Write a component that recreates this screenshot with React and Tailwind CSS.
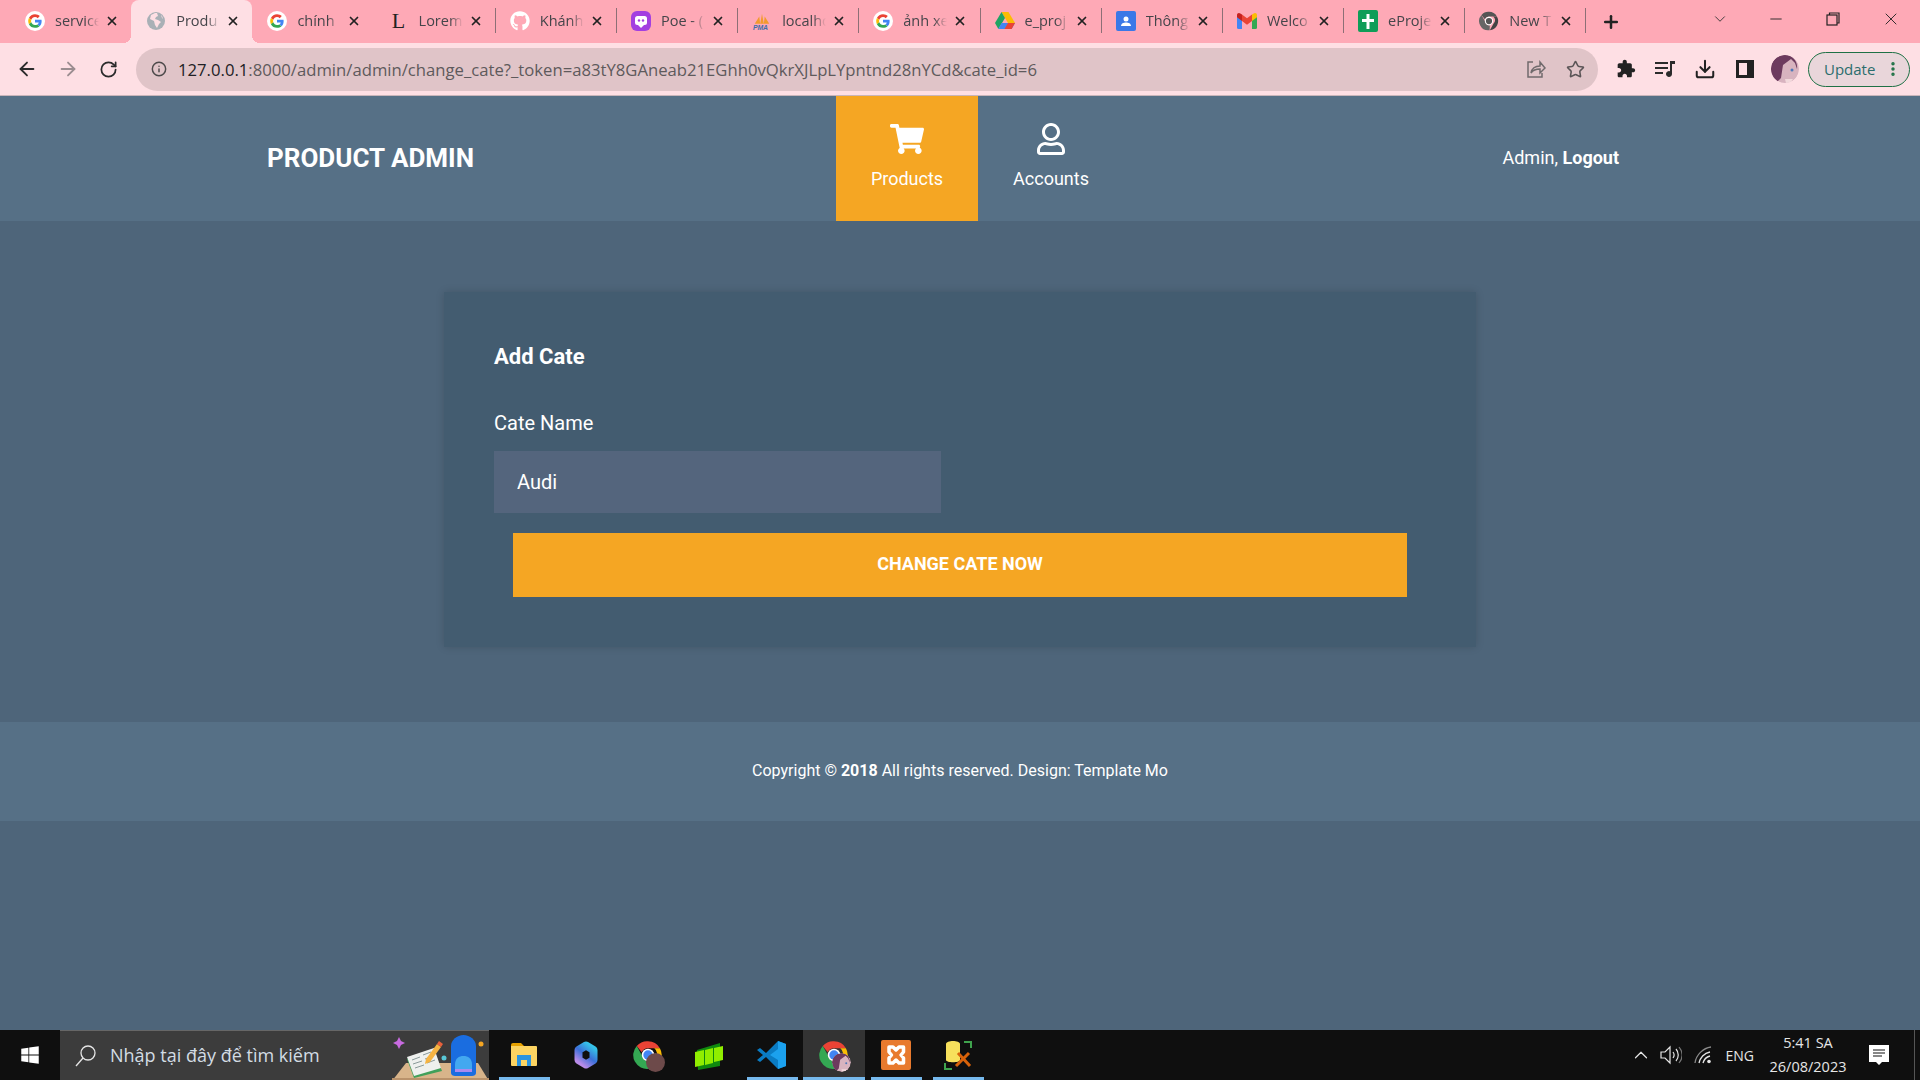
import React from "react";
import { FaShoppingCart, FaRegUser, FaWindows, FaGithub } from "react-icons/fa";
import { ArrowLeft, ArrowRight, RotateCw, Info, Star, Download, Plus, X, Minus, ChevronDown, ChevronUp, EllipsisVertical } from "lucide-react";

const GoogleIcon = () => (
  <svg width="20" height="20" viewBox="0 0 48 48">
    <circle cx="24" cy="24" r="24" fill="#fff" />
    <path fill="#EA4335" d="M24 14.5c2.6 0 4.8.9 6.6 2.6l4.9-4.9C32.500 9.400 28.600 7.700 24 7.700c-6.400 0-11.900 3.700-14.600 9l5.700 4.400c1.300-3.900 4.900-6.600 8.900-6.600z" />
    <path fill="#4285F4" d="M39.900 24.400c0-1.200-.1-2.300-.3-3.400H24v6.400h9c-.4 2.100-1.600 3.900-3.300 5.100l5.400 4.200c3-2.900 4.800-7.100 4.800-12.300z" />
    <path fill="#FBBC05" d="M15.100 27.100c-.3-1-.5-2-.5-3.100s.2-2.100.5-3.100l-5.700-4.400C8.300 18.800 7.700 21.300 7.700 24s.6 5.200 1.700 7.500l5.700-4.400z" />
    <path fill="#34A853" d="M24 40.300c4.400 0 8.100-1.500 10.800-3.900l-5.400-4.200c-1.500 1-3.300 1.600-5.400 1.600-4 0-7.600-2.700-8.900-6.600l-5.700 4.400c2.700 5.300 8.200 8.700 14.600 8.700z" />
  </svg>
);

const GlobeIcon = () => (
  <svg width="20" height="20" viewBox="0 0 20 20">
    <circle cx="10" cy="10" r="9" fill="#a9b0b6" />
    <path fill="#fedfe4" d="M9 2 5 4 4 8l4 2 1 4 2 3 2-4 2-2-3-2-3-1 1-2 2-1-1-3zM15 4l1 3 1 1-1-3z" />
  </svg>
);

const LoremIcon = () => (
  <span className="w-5 text-center text-[22px] leading-none text-[#222] [font-family:'Liberation_Serif',serif]">L</span>
);

const PoeIcon = () => (
  <svg width="20" height="20" viewBox="0 0 20 20">
    <rect x="0" y="0" width="20" height="20" rx="6" fill="#a33fe0" />
    <rect x="4" y="5" width="12" height="9" rx="2.500" fill="#fff" />
    <circle cx="8" cy="9.500" r="1.200" fill="#a33fe0" />
    <circle cx="12" cy="9.500" r="1.200" fill="#a33fe0" />
    <path d="M7 14h6l-3 3z" fill="#fff" />
  </svg>
);

const PmaIcon = () => (
  <svg width="22" height="20" viewBox="0 0 22 20">
    <path d="M3 13 8 5l1 8zM9 13l2-11 2 11zM13 13l1-8 5 8z" fill="#f39a2d" />
    <text x="1" y="19.500" fontSize="7.500" fontWeight="700" fontStyle="italic" fill="#3f6ea8" fontFamily="Liberation Sans, sans-serif">PMA</text>
  </svg>
);

const DriveIcon = () => (
  <svg width="20" height="18" viewBox="0 0 20 18">
    <path d="M6.500 0h7l6.500 11h-7z" fill="#fbbc04" />
    <path d="M6.500 0 0 11l3.400 6 6.600-11z" fill="#1fa463" />
    <path d="M6.500 11H20l-3.400 6H3.400z" fill="#4285f4" />
    <path d="M13 11h7l-3.400 6H9.500z" fill="#ea4335" />
  </svg>
);

const ContactsIcon = () => (
  <svg width="20" height="20" viewBox="0 0 20 20">
    <rect width="20" height="20" rx="2" fill="#3b78e7" />
    <circle cx="10" cy="8" r="2.500" fill="#fff" />
    <path d="M5 15c0-2.500 2.500-3.500 5-3.500s5 1 5 3.500z" fill="#fff" />
  </svg>
);

const GmailIcon = () => (
  <svg width="20" height="16" viewBox="0 0 20 16">
    <path d="M0 2v12.500A1.500 1.500 0 0 0 1.500 16H5V7z" fill="#4285f4" />
    <path d="M20 2v12.500a1.500 1.500 0 0 1-1.500 1.500H15V7z" fill="#34a853" />
    <path d="M15 1.500V8l5-3.700V2c0-1.800-2-2.600-3.300-1.500z" fill="#fbbc04" />
    <path d="M5 8V1.500l5 3.800 5-3.800V8l-5 3.700z" fill="#ea4335" />
    <path d="M0 2v2.300L5 8V1.500L3.300.5C2 -.6 0 .2 0 2z" fill="#c5221f" />
  </svg>
);

const SheetIcon = () => (
  <svg width="20" height="22" viewBox="0 0 20 22">
    <rect width="20" height="22" rx="2" fill="#0f9d58" />
    <path d="M8.500 4h3v5H16v3h-4.500v7h-3v-7H4V9h4.500z" fill="#fff" />
  </svg>
);

const ChromeIcon = ({ size = 20, gray = false }) => (
  <svg width={size} height={size} viewBox="0 0 48 48">
    <path d="M24 2a22 22 0 0 1 19 11H24a11 11 0 0 0-10 6.500L6 9.500A22 22 0 0 1 24 2z" fill={gray ? "#555" : "#ea4335"} />
    <path d="M43 13a22 22 0 0 1-17 33l9-16a11 11 0 0 0-1-17z" fill={gray ? "#444" : "#fbbc04"} />
    <path d="M6 9.500 15 26a11 11 0 0 0 11 9l-.5 11A22 22 0 0 1 6 9.500z" fill={gray ? "#666" : "#34a853"} />
    <circle cx="24" cy="24" r="10" fill="#fff" />
    <circle cx="24" cy="24" r="7.500" fill={gray ? "#555" : "#4285f4"} />
  </svg>
);

const Avatar = ({ size = 28 }) => (
  <svg width={size} height={size} viewBox="0 0 28 28" className="rounded-full">
    <circle cx="14" cy="14" r="14" fill="#d8b3bf" />
    <path d="M14 0C6 0 0 6 0 14c0 6 2 10 6 13l4-4 2-13 8-6 4 4 2 6c1-7-4-14-12-14z" fill="#6d3a5e" />
    <circle cx="21" cy="15" r="1.500" fill="#4f78b8" />
    <path d="M14 24h8l-3 4h-4z" fill="#f2d9dc" />
  </svg>
);

const tabs = [
  { title: "service", icon: <GoogleIcon /> },
  { title: "Produ", icon: <GlobeIcon />, active: true },
  { title: "chính", icon: <GoogleIcon /> },
  { title: "Lorem", icon: <LoremIcon />, sep: true },
  { title: "Khánh", icon: <FaGithub size={20} color="#fff" />, sep: true },
  { title: "Poe - (", icon: <PoeIcon />, sep: true },
  { title: "localho", icon: <PmaIcon />, sep: true },
  { title: "ảnh xe", icon: <GoogleIcon />, sep: true },
  { title: "e_proj", icon: <DriveIcon />, sep: true },
  { title: "Thông", icon: <ContactsIcon />, sep: true },
  { title: "Welco", icon: <GmailIcon />, sep: true },
  { title: "eProje", icon: <SheetIcon />, sep: true },
  { title: "New T", icon: <ChromeIcon gray />, sep: true },
];

function Tab({ tab, showSep }) {
  return (
    <div className={`relative flex h-[43px] w-[121.2px] shrink-0 items-center pb-[2px] pl-[15px] ${tab.active ? "rounded-t-lg bg-[#fedfe4]" : ""}`}>
      {tab.active && (
        <>
          <span className="absolute -left-2 bottom-0 size-2 bg-[radial-gradient(circle_at_0_0,transparent_8px,#fedfe4_8px)]" />
          <span className="absolute -right-2 bottom-0 size-2 bg-[radial-gradient(circle_at_100%_0,transparent_8px,#fedfe4_8px)]" />
        </>
      )}
      <span className="flex w-5 shrink-0 items-center justify-center">{tab.icon}</span>
      <span className="ml-[10px] w-[44px] overflow-hidden whitespace-nowrap text-[14.500px] text-[#45454a] [mask-image:linear-gradient(90deg,#000_70%,transparent)]">
        {tab.title}
      </span>
      <X size={14} strokeWidth={3} className="ml-[6px] shrink-0 text-[#222]" />
      {showSep && <span className="ml-auto mr-[-1px] h-[25px] w-px bg-[#8d6f76]" />}
    </div>
  );
}

function BrowserChrome() {
  return (
    <div className="shrink-0 [font-family:'Open_Sans',sans-serif]">
      <div className="flex h-[43px] items-center bg-[#fea9b6] pl-[10px]">
        {tabs.map((tab) => (
          <Tab key={tab.title} tab={tab} showSep={tab.sep} />
        ))}
        <Plus size={20} strokeWidth={3} className="ml-[16px] text-[#222]" />
        <ChevronDown size={18} strokeWidth={1.2} className="ml-[90px] -mt-[5px] text-[#333]" />
        <Minus size={18} strokeWidth={1.2} className="ml-[38px] -mt-[5px] text-[#222]" />
        <svg width="14" height="14" viewBox="0 0 14 14" className="ml-[41px] -mt-[5px]" fill="none" stroke="#222" strokeWidth="1.200">
          <rect x="1" y="3" width="10" height="10" />
          <path d="M3.500 3V1H13v10h-2" />
        </svg>
        <X size={20} strokeWidth={1.100} className="ml-[41px] -mt-[5px] text-[#222]" />
      </div>
      <div className="flex h-[52px] items-center bg-[#fedfe4] pl-[16px]">
        <ArrowLeft size={22} strokeWidth={2} className="text-[#2b2b2b]" />
        <ArrowRight size={22} strokeWidth={2} className="ml-[19px] text-[#9b8d90]" />
        <RotateCw size={19} strokeWidth={2.200} className="ml-[20px] text-[#2b2b2b]" />
        <div className="ml-[18px] flex h-[43px] w-[1462px] items-center rounded-full bg-[#e0c4c8] pl-[15px]">
          <Info size={16} strokeWidth={2.200} className="text-[#4d4a4b]" />
          <span className="ml-[11px] whitespace-nowrap pt-[1px] text-[16.680px] text-[#5e5a5c]">
            <span className="text-[#202124]">127.0.0.1</span>:8000/admin/admin/change_cate?_token=a83tY8GAneab21EGhh0vQkrXJLpLYpntnd28nYCd&amp;cate_id=6
          </span>
          <svg width="20" height="20" viewBox="0 0 20 20" fill="none" stroke="#706a6c" strokeWidth="1.500" className="ml-auto">
            <path d="M7 3H2v15h14v-4" />
            <path d="M5 14c1-5 5-7 9-7V3l5 6-5 5v-4c-4 0-7 1-9 4z" />
          </svg>
          <Star size={19} strokeWidth={2} className="ml-[20px] mr-[13px] text-[#5b5557]" />
        </div>
        <svg width="20" height="20" viewBox="0 0 24 24" fill="#222" className="ml-[18px]">
          <path d="M20.500 11H19V7c0-1.100-.9-2-2-2h-4V3.500C13 2.120 11.880 1 10.500 1S8 2.120 8 3.500V5H4c-1.100 0-1.990.9-1.990 2v3.800H3.500c1.490 0 2.700 1.210 2.700 2.700s-1.210 2.700-2.700 2.700H2V20c0 1.100.9 2 2 2h3.800v-1.500c0-1.490 1.210-2.700 2.700-2.700 1.490 0 2.700 1.210 2.700 2.700V22H17c1.100 0 2-.9 2-2v-4h1.500c1.380 0 2.500-1.120 2.500-2.500S21.880 11 20.500 11z" />
        </svg>
        <svg width="20" height="18" viewBox="0 0 20 18" className="ml-[19px]" fill="#2b2b2b">
          <path d="M0 2h13v2H0zM0 7h13v2H0zM0 12h8v2H0zM15 1h5v3h-3v10a3 3 0 1 1-2-2.800z" />
        </svg>
        <Download size={22} strokeWidth={2.200} className="ml-[19px] text-[#222]" />
        <svg width="18" height="18" viewBox="0 0 18 18" className="ml-[20px]">
          <path d="M0 0h18v18H0z" fill="#222" />
          <path d="M3 3h8v12H3z" fill="#fedfe4" />
        </svg>
        <span className="ml-[17px]"><Avatar /></span>
        <div className="ml-[9px] flex h-[35px] w-[102px] items-center rounded-full border border-[#1e7145] bg-[#e9d6da] pl-[15px]">
          <span className="text-[15px] text-[#2b6d6d]">Update</span>
          <EllipsisVertical size={18} strokeWidth={2.600} className="ml-[9px] text-[#1e7145]" />
        </div>
      </div>
    </div>
  );
}

function AdminPage() {
  return (
    <div className="min-h-0 flex-1 bg-[#4e657a] text-white [font-family:Roboto,sans-serif]">
      <nav className="flex h-[125px] items-center bg-[#567086]">
        <div className="w-[836px] pl-[267px] text-[26px] font-bold">PRODUCT ADMIN</div>
        <a className="flex h-full w-[142px] flex-col items-center justify-center bg-[#f5a623] pb-[3px]">
          <FaShoppingCart size={34} />
          <span className="mt-[9px] text-[18px]">Products</span>
        </a>
        <a className="flex h-full w-[146px] flex-col items-center justify-center pb-[3px]">
          <FaRegUser size={32} />
          <span className="mt-[10px] text-[18px]">Accounts</span>
        </a>
        <div className="ml-auto pb-[2px] pr-[301px] text-[18px]">
          Admin, <span className="font-bold">Logout</span>
        </div>
      </nav>

      <div className="mx-auto mt-[71px] h-[355px] w-[1032px] bg-[#435c70] px-[50px] pt-[51px] shadow-[0_0_8px_rgba(0,0,0,0.15)]">
        <h2 className="text-[22px] leading-[28px] font-bold">Add Cate</h2>
        <label className="mt-[40px] block text-[20px] leading-[24px]">Cate Name</label>
        <input
          readOnly
          value="Audi"
          className="mt-[16px] block h-[62px] w-[447px] bg-[#54657d] px-[23px] text-[20px] text-white outline-none"
        />
        <button className="mx-[19px] mt-[20px] block h-[64px] w-[894px] bg-[#f5a623] pb-[3px] text-[18px] font-bold uppercase">
          Change Cate Now
        </button>
      </div>

      <footer className="mt-[75px] flex h-[99px] items-center justify-center bg-[#567086] pb-[1px] text-[16px]">
        <p>
          Copyright © <b>2018</b> All rights reserved. Design: Template Mo
        </p>
      </footer>
    </div>
  );
}

const SearchArt = () => (
  <svg width="97" height="50" viewBox="0 0 97 50" className="ml-auto shrink-0">
    <path d="M0 50 14 32h72l11 18z" fill="#d8b48a" />
    <path d="M0 50h97v-3H0z" fill="#b9926b" />
    <path d="m7 6 2 4 4 2-4 2-2 4-2-4-4-2 4-2z" fill="#c86be0" />
    <path d="M15 28 42 20l8 20-28 7z" fill="#41a05a" />
    <path d="M15 26 42 17l7 20-27 8z" fill="#eef0ee" />
    <path d="M20 29 28 26M21 33 30 30M23 37 32 34M31 24 39 21M33 28 41 25M35 32 43 29" stroke="#8a9a9a" strokeWidth="1" />
    <path d="m34 28 11-15 4 3-11 15-5 2z" fill="#f5b342" />
    <path d="m45 13 2-3 4 3-2 3z" fill="#e8603c" />
    <path d="M59 15c0-6 6-11 12.500-11S84 9 84 15v27c0 2-2 3-4 3H63c-2 0-4-1-4-3z" fill="#1a6de0" />
    <path d="M63 34c0-7 4-9 8.500-9s8.500 2 8.500 9v7H63z" fill="#43a8f0" />
    <path d="M63 38h17v3H63z" fill="#a98af0" />
    <circle cx="89" cy="13" r="2.500" fill="#f5a623" />
    <circle cx="52" cy="27" r="2.500" fill="#58c8d8" />
  </svg>
);

const FolderIcon = () => (
  <svg width="28" height="28" viewBox="0 0 28 28">
    <path d="M1 4a2 2 0 0 1 2-2h8l3 3H1z" fill="#e6a100" />
    <path d="M1 5h25a1 1 0 0 1 1 1v18a1 1 0 0 1-1 1H2a1 1 0 0 1-1-1z" fill="#fcd462" />
    <path d="M7 14h14v11h-4v-6h-6v6H7z" fill="#2a94e0" />
  </svg>
);

const CopilotIcon = () => (
  <svg width="28" height="30" viewBox="0 0 28 30">
    <defs>
      <linearGradient id="copilotRing" x1="0.800" y1="0" x2="0.200" y2="1">
        <stop offset="0" stopColor="#35c1e8" />
        <stop offset="0.500" stopColor="#3b6fd8" />
        <stop offset="1" stopColor="#b98be8" />
      </linearGradient>
    </defs>
    <path d="M14 5.500 21.500 10v10L14 24.500 6.500 20V10z" fill="none" stroke="url(#copilotRing)" strokeWidth="8" strokeLinejoin="round" />
  </svg>
);

const BlocksIcon = () => (
  <svg width="30" height="30" viewBox="0 0 30 30">
    <path d="M2 10 25 3v23L3 30z" fill="#0f8a0f" />
    <path d="M0 12 9 10v15l-9 2zM10 10l8-2v15l-8 2zM19 8l9-2v14l-9 2z" fill="#90ee00" />
  </svg>
);

const VsCodeIcon = () => (
  <svg width="30" height="30" viewBox="0 0 30 30">
    <path d="M21 1 9 13 3 8 0 10l6 5-6 5 3 2 6-5 12 12 8-3V4z" fill="#0a7cc4" />
    <path d="M21 1l8 3v22l-8 3V20l-8-5 8-6z" fill="#1ba1ee" />
  </svg>
);

const XamppIcon = () => (
  <svg width="30" height="30" viewBox="0 0 30 30">
    <rect width="30" height="30" rx="2" fill="#e87a2e" />
    <path d="M8 7h4l3 3 3-3h4.500v5L20 15l2.500 3v5H18l-3-3-3 3H8v-5l2.500-3L8 12z" fill="none" stroke="#fff" strokeWidth="3.500" strokeLinejoin="round" />
  </svg>
);

const ToolsIcon = () => (
  <svg width="30" height="32" viewBox="0 0 30 32">
    <path d="M3 5c0-4 14-4 14 0v16c0 3-14 3-14 0z" fill="#f7e05c" />
    <path d="M21 3h7v6M2 24v6h7" fill="none" stroke="#3fa34d" strokeWidth="2" />
    <path d="m13 27 13-13M15 14l12 13" stroke="#d8620a" strokeWidth="3" />
  </svg>
);

const ChromeBadge = ({ badge }) => (
  <span className="relative block size-[30px]">
    <ChromeIcon size={30} />
    <span className="absolute -bottom-[2px] -right-[2px] block size-[19px] overflow-hidden rounded-full">{badge}</span>
  </span>
);

const taskItems = [
  { icon: <FolderIcon />, line: "w-[51px]" },
  { icon: <CopilotIcon /> },
  { icon: <ChromeBadge badge={<span className="block size-full bg-[#6d4a4a]" />} /> },
  { icon: <BlocksIcon /> },
  { icon: <VsCodeIcon />, line: "w-[51px]" },
  { icon: <ChromeBadge badge={<Avatar size={19} />} />, line: "w-full", active: true },
  { icon: <XamppIcon />, line: "w-[51px]" },
  { icon: <ToolsIcon />, line: "w-[51px]" },
];

function Taskbar() {
  return (
    <div className="flex h-[50px] shrink-0 items-center bg-[#0f0f0f] text-[#e6e6e6] [font-family:'Open_Sans',sans-serif]">
      <div className="flex w-[60px] justify-center">
        <FaWindows size={20} color="#fff" />
      </div>
      <div className="flex h-full w-[429px] items-center overflow-hidden border-t border-[#666] bg-[#3c3c3c] pl-[15px]">
        <svg width="22" height="24" viewBox="0 0 22 24" fill="none" stroke="#e6e6e6" strokeWidth="1.300">
          <circle cx="13" cy="9" r="7" />
          <path d="M8 14 1 22" />
        </svg>
        <span className="ml-[13px] whitespace-nowrap text-[18px] text-[#d3dce4]">Nhập tại đây để tìm kiếm</span>
        <SearchArt />
      </div>
      <div className="ml-[4px] flex h-full">
        {taskItems.map((item, i) => (
          <div key={i} className={`relative flex h-full w-[62px] items-center justify-center ${item.active ? "bg-[#333]" : ""}`}>
            {item.icon}
            {item.line && <span className={`absolute bottom-0 h-[3px] bg-[#76b9ed] ${item.line}`} />}
          </div>
        ))}
      </div>
      <div className="ml-auto flex items-center">
        <ChevronUp size={22} strokeWidth={1.300} />
        <svg width="22" height="20" viewBox="0 0 22 20" fill="none" stroke="#e6e6e6" strokeWidth="1.200" className="ml-[8px]">
          <path d="M1 7h4l5-5v16l-5-5H1z" />
          <path d="M13 7c1.500 2 1.500 4 0 6M16 4c3 3.500 3 8.500 0 12" />
          <path d="M19 2c4 5 4 11 0 16" stroke="#777" />
        </svg>
        <svg width="22" height="20" viewBox="0 0 22 20" fill="none" stroke="#e6e6e6" strokeWidth="1.300" className="ml-[12px]">
          <path d="M1 18C2 10 9 3 17 2" stroke="#8a8a8a" />
          <path d="M5 18c1-5 5-10 11-11M9 18c.8-3 3-6 7-7" />
          <circle cx="15" cy="16.500" r="1.800" fill="#e6e6e6" stroke="none" />
        </svg>
        <span className="ml-[10px] text-[14px]">ENG</span>
        <div className="ml-[14px] w-[80px] text-center text-[14.500px] leading-[24px]">
          <div>5:41 SA</div>
          <div>26/08/2023</div>
        </div>
        <svg width="20" height="21" viewBox="0 0 20 21" className="ml-[21px]">
          <path d="M0 0h20v17h-7l-3 3-3-3H0z" fill="#fff" />
          <path d="M4 5h12M4 8h12M4 11h9" stroke="#111" strokeWidth="1.200" />
        </svg>
        <span className="ml-[25px] mr-[5px] h-[50px] w-px bg-[#555]" />
      </div>
    </div>
  );
}

export default function App() {
  return (
    <div className="flex h-[1080px] w-[1920px] flex-col overflow-hidden">
      <BrowserChrome />
      <div className="h-px shrink-0 bg-[#c9b5ba]" />
      <AdminPage />
      <Taskbar />
    </div>
  );
}
